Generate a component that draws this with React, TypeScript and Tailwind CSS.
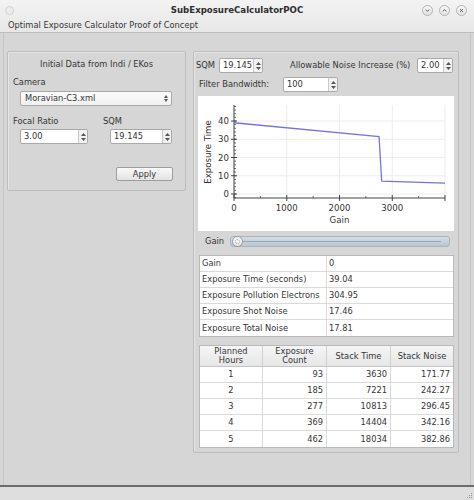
import React from "react";

const Arrows = () => (
  <div className="flex w-[9px] flex-col items-center justify-center gap-[2px] border-l border-[#c9c9c9] bg-[#f1f1f1]">
    <svg width="5" height="3" viewBox="0 0 5 3"><path d="M0 3 L2.5 0 L5 3 Z" fill="#555" /></svg>
    <svg width="5" height="3" viewBox="0 0 5 3"><path d="M0 0 L2.5 3 L5 0 Z" fill="#555" /></svg>
  </div>
);

const Spin = ({ value, w }: { value: string; w: string }) => (
  <div className={`flex h-[15px] ${w} overflow-hidden rounded-[2px] border border-[#a9a9a9] bg-white`}>
    <div className="flex flex-1 items-center pl-[3px] leading-none">{value}</div>
    <Arrows />
  </div>
);

const Chart = () => {
  const X = (g: number) => 36 + g * 0.05275;
  const Y = (v: number) => 98 - v * 1.825;
  const pts = [
    [0, 39.04],
    [2750, 31.5],
    [2800, 7],
    [4000, 6],
  ]
    .map(([g, v]) => `${X(g)},${Y(v)}`)
    .join(" ");
  const minorY: number[] = [];
  for (let v = -2; v <= 48; v += 2) minorY.push(v);
  return (
    <svg width="256" height="135" viewBox="0 0 256 135" className="block">
      {[1000, 2000, 3000, 4000].map((g) => (
        <line key={g} x1={X(g)} x2={X(g)} y1={9} y2={102} stroke="#ececec" strokeWidth="1" />
      ))}
      {[0, 10, 20, 30, 40].map((v) => (
        <line key={v} x1={36} x2={247} y1={Y(v)} y2={Y(v)} stroke="#ececec" strokeWidth="1" />
      ))}
      <line x1={36} x2={36} y1={9} y2={102} stroke="#444" strokeWidth="1" />
      <line x1={36} x2={247} y1={102} y2={102} stroke="#444" strokeWidth="1" />
      {minorY.map((v) => (
        <line key={v} x1={36} x2={38} y1={Y(v)} y2={Y(v)} stroke="#444" strokeWidth="0.8" />
      ))}
      {[0, 10, 20, 30, 40].map((v) => (
        <line key={v} x1={33} x2={39} y1={Y(v)} y2={Y(v)} stroke="#444" strokeWidth="1" />
      ))}
      {[500, 1500, 2500, 3500].map((g) => (
        <line key={g} x1={X(g)} x2={X(g)} y1={100} y2={102} stroke="#444" strokeWidth="0.8" />
      ))}
      {[0, 1000, 2000, 3000, 4000].map((g) => (
        <line key={g} x1={X(g)} x2={X(g)} y1={99} y2={105} stroke="#444" strokeWidth="1" />
      ))}
      <polyline points={pts} fill="none" stroke="#7474e0" strokeWidth="1.3" />
      <g fill="#333" fontSize="8.6" fontFamily="DejaVu Sans, sans-serif">
        {[0, 10, 20, 30, 40].map((v) => (
          <text key={v} x={31} y={Y(v) + 3} textAnchor="end">
            {v}
          </text>
        ))}
        {[0, 1000, 2000, 3000].map((g) => (
          <text key={g} x={X(g)} y={115} textAnchor="middle">
            {g}
          </text>
        ))}
        <text x={141.5} y={127} textAnchor="middle">Gain</text>
        <text x={0} y={0} textAnchor="middle" transform="translate(13 56) rotate(-90)">
          Exposure Time
        </text>
      </g>
    </svg>
  );
};

const WinBtn = ({ kind }: { kind: "min" | "max" | "close" }) => (
  <div className="flex h-[11px] w-[11px] items-center justify-center rounded-full border border-[#b4b4b4] bg-gradient-to-b from-[#f7f7f7] to-[#e2e2e2]">
    <svg width="5" height="5" viewBox="0 0 5 5">
      {kind === "min" && <path d="M0.8 1.6 L2.5 3.4 L4.2 1.6" stroke="#555" strokeWidth="0.9" fill="none" />}
      {kind === "max" && <path d="M0.8 3.4 L2.5 1.6 L4.2 3.4" stroke="#555" strokeWidth="0.9" fill="none" />}
      {kind === "close" && <path d="M1 1 L4 4 M4 1 L1 4" stroke="#555" strokeWidth="0.9" fill="none" />}
    </svg>
  </div>
);

const info = [
  ["Gain", "0"],
  ["Exposure Time (seconds)", "39.04"],
  ["Exposure Pollution Electrons", "304.95"],
  ["Exposure Shot Noise", "17.46"],
  ["Exposure Total Noise", "17.81"],
];

const stack = [
  ["1", "93", "3630", "171.77"],
  ["2", "185", "7221", "242.27"],
  ["3", "277", "10813", "296.45"],
  ["4", "369", "14404", "342.16"],
  ["5", "462", "18034", "382.86"],
];

export default function App() {
  return (
    <div className="flex h-[500px] w-[474px] flex-col overflow-hidden bg-[#d6d6d6] font-['DejaVu_Sans',sans-serif] text-[8.3px] text-[#353535]">
      {/* Title bar */}
      <div className="bg-gradient-to-b from-[#f3f3f3] to-[#e7e7e7]">
        <div className="grid h-[20px] grid-cols-[1fr_auto_1fr] items-center">
          <div className="pl-[5px]">
            <div className="h-[9px] w-[9px] rounded-full border border-[#d0d0d0] bg-[#ececec]" />
          </div>
          <div className="text-[8.6px] font-bold leading-none text-[#2e2e2e]">SubExposureCalculatorPOC</div>
          <div className="flex justify-end gap-[6px] pr-[7px]">
            <WinBtn kind="min" />
            <WinBtn kind="max" />
            <WinBtn kind="close" />
          </div>
        </div>
        <div className="h-[13px] border-b border-[#bdbdbd] pl-[8px] leading-[10px]">
          Optimal Exposure Calculator Proof of Concept
        </div>
      </div>

      {/* Main */}
      <div className="ml-[3px] mr-[3px] flex flex-1 items-start border-x border-[#c6c6c6] pl-[3px] pt-[18px]">
        {/* Left group */}
        <div className="flex h-[140px] w-[179px] flex-col rounded-[2px] border border-[#bdbdbd] pl-[5px] shadow-[inset_1px_1px_0_#e4e4e4]">
          <div className="mt-[7px] pr-[5px] text-center leading-[10px]">Initial Data from Indi / EKos</div>
          <div className="mt-[8px] leading-[10px]">Camera</div>
          <div className="ml-[7px] mt-[4px] flex h-[15px] w-[152px] overflow-hidden rounded-[2px] border border-[#a9a9a9] bg-gradient-to-b from-[#fcfcfc] to-[#f0f0f0]">
            <div className="flex flex-1 items-center pl-[4px] leading-none">Moravian-C3.xml</div>
            <div className="flex w-[10px] flex-col items-center justify-center gap-[1px]">
              <svg width="4" height="3" viewBox="0 0 4 3"><path d="M0 3 L2 0 L4 3 Z" fill="#555" /></svg>
              <svg width="4" height="3" viewBox="0 0 4 3"><path d="M0 0 L2 3 L4 0 Z" fill="#555" /></svg>
            </div>
          </div>
          <div className="mt-[10px] flex leading-[10px]">
            <div className="w-[90px]">Focal Ratio</div>
            <div>SQM</div>
          </div>
          <div className="ml-[7px] mt-[3px] flex gap-[22px]">
            <Spin value="3.00" w="w-[68px]" />
            <Spin value="19.145" w="w-[62px]" />
          </div>
          <div className="mr-[12px] mt-[23px] flex h-[14px] w-[57px] items-center justify-center self-end rounded-[2px] border border-[#9d9d9d] bg-gradient-to-b from-[#fafafa] to-[#e3e3e3] leading-none">
            Apply
          </div>
        </div>

        {/* Right panel */}
        <div className="ml-[7px] flex h-[402px] w-[266px] flex-col rounded-[2px] border border-[#bdbdbd] shadow-[inset_1px_1px_0_#e4e4e4]">
          <div className="mt-[6px] flex h-[15px] items-center">
            <div className="w-[25px] pl-[2px] leading-none">SQM</div>
            <Spin value="19.145" w="w-[44px]" />
            <div className="ml-[27px] leading-none">Allowable Noise Increase (%)</div>
            <div className="ml-auto mr-[5px]">
              <Spin value="2.00" w="w-[36px]" />
            </div>
          </div>
          <div className="mt-[4px] flex h-[15px] items-center">
            <div className="w-[89px] pl-[5px] leading-none">Filter Bandwidth:</div>
            <Spin value="100" w="w-[55px]" />
          </div>
          <div className="ml-[4px] mt-[4px] h-[135px] w-[256px] bg-white">
            <Chart />
          </div>
          <div className="mt-[4px] flex h-[13px] items-center">
            <div className="w-[36px] pl-[11px] leading-none">Gain</div>
            <div className="relative flex h-[11px] w-[220px] items-center rounded-[3px] border border-[#a9b5bf] bg-gradient-to-b from-[#d3dce3] to-[#bac7d1]">
              <div className="mx-[8px] h-[1px] flex-1 bg-[#9aa9b5]" />
              <div className="absolute left-[1px] top-[-1px] flex h-[11px] w-[11px] items-center justify-center rounded-full border border-[#9a9a9a] bg-gradient-to-b from-[#fdfdfd] to-[#e4e4e4]">
                <div className="h-[5px] w-[5px] rounded-full border border-dotted border-[#b0b0b0]" />
              </div>
            </div>
          </div>

          {/* Info table */}
          <div className="ml-[5px] mt-[7px] w-[255px] border border-[#b9b9b9] bg-white">
            {info.map(([k, v], i) => (
              <div key={k} className={`grid h-[16px] grid-cols-[127px_1fr] ${i < info.length - 1 ? "border-b border-[#dadada]" : ""}`}>
                <div className="flex items-center border-r border-[#dadada] pl-[2px] leading-none">{k}</div>
                <div className="flex items-center pl-[2px] leading-none">{v}</div>
              </div>
            ))}
          </div>

          {/* Stack table */}
          <div className="ml-[5px] mt-[8px] w-[255px] border border-[#b9b9b9] bg-white">
            <div className="grid h-[21px] grid-cols-[63px_64px_64px_1fr] border-b border-[#c4c4c4] bg-gradient-to-b from-[#f6f6f6] to-[#e6e6e6] text-center leading-[9px]">
              <div className="flex items-center justify-center border-r border-[#cfcfcf]">Planned<br />Hours</div>
              <div className="flex items-center justify-center border-r border-[#cfcfcf]">Exposure<br />Count</div>
              <div className="flex items-center justify-center border-r border-[#cfcfcf]">Stack Time</div>
              <div className="flex items-center justify-center">Stack Noise</div>
            </div>
            {stack.map((r, i) => (
              <div key={r[0]} className={`grid h-[16px] grid-cols-[63px_64px_64px_1fr] ${i < stack.length - 1 ? "border-b border-[#dadada]" : ""}`}>
                <div className="flex items-center justify-center border-r border-[#dadada] leading-none">{r[0]}</div>
                <div className="flex items-center justify-end border-r border-[#dadada] pr-[3px] leading-none">{r[1]}</div>
                <div className="flex items-center justify-end border-r border-[#dadada] pr-[3px] leading-none">{r[2]}</div>
                <div className="flex items-center justify-end pr-[3px] leading-none">{r[3]}</div>
              </div>
            ))}
          </div>
        </div>
      </div>

      {/* Bottom */}
      <div className="h-[2px] bg-[#6c6c6c]" />
      <div className="flex h-[13px] items-end justify-end bg-[#dedede] pb-[1px] pr-[1px]">
        <svg width="8" height="8" viewBox="0 0 8 8">
          <rect x="6" y="2" width="1" height="1" fill="#999" />
          <rect x="4" y="4" width="1" height="1" fill="#999" />
          <rect x="6" y="4" width="1" height="1" fill="#999" />
          <rect x="2" y="6" width="1" height="1" fill="#999" />
          <rect x="4" y="6" width="1" height="1" fill="#999" />
          <rect x="6" y="6" width="1" height="1" fill="#999" />
        </svg>
      </div>
    </div>
  );
}
